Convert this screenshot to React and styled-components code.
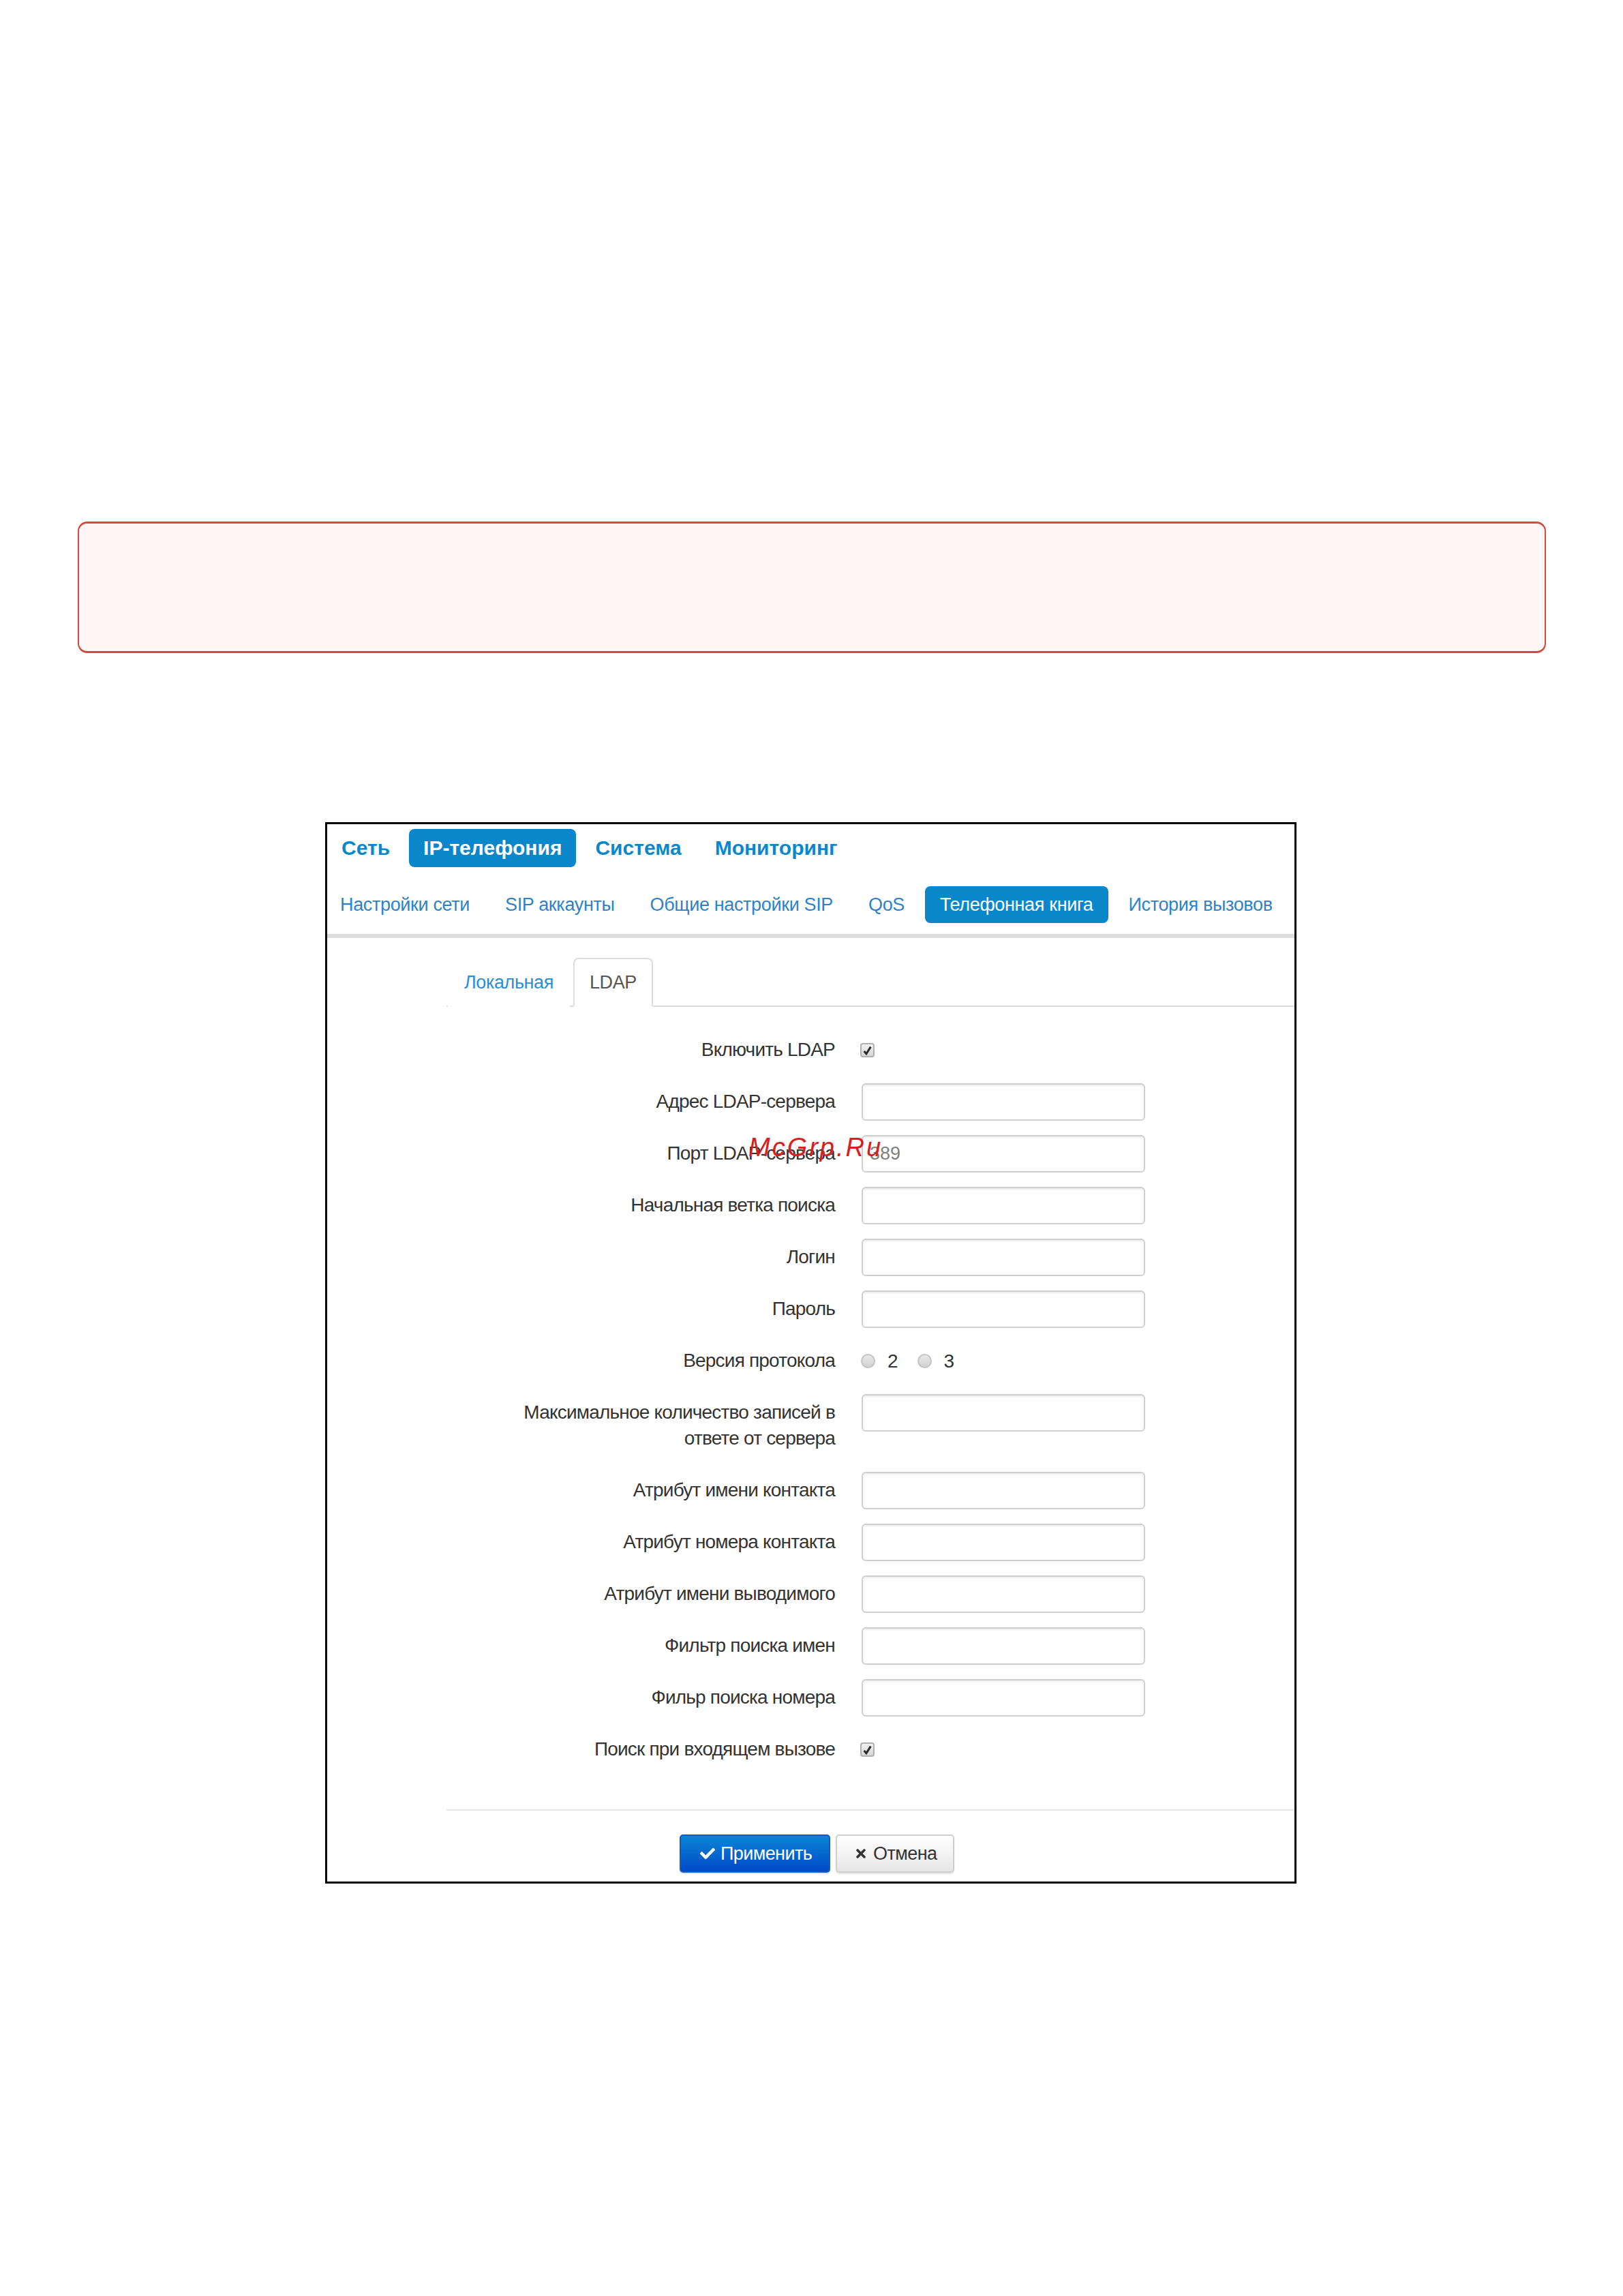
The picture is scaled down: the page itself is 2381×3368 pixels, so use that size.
import React from 'react';
import styled, { createGlobalStyle } from 'styled-components';
import { FaCheck, FaTimes } from 'react-icons/fa';

const GlobalStyle = createGlobalStyle`
  body {
    margin: 0;
    background: #fff;
    font-family: "Liberation Sans", Arial, sans-serif;
  }
`;

const Page = styled.div`
  width: 2381px;
  min-height: 3368px;
  padding-top: 765px;
  box-sizing: border-box;
`;

const Notice = styled.div`
  margin-left: 114px;
  width: 2154px;
  height: 193px;
  box-sizing: border-box;
  border: 2px solid #d64a3b;
  border-top-width: 3px;
  border-bottom-width: 3px;
  border-radius: 14px;
  background: #fff6f5;
`;

const Frame = styled.div`
  position: relative;
  margin: 248px 0 0 477px;
  width: 1425px;
  box-sizing: border-box;
  border: 3px solid #000;
  padding-bottom: 13px;
`;

const Watermark = styled.div`
  position: absolute;
  left: 618px;
  top: 455px;
  font-size: 38px;
  line-height: 38px;
  font-style: italic;
  letter-spacing: 3px;
  color: #d81e1e;
  pointer-events: none;
`;

// Navigation
const NavBlock = styled.div`
  padding: 7px 0 16px;
  border-bottom: 6px solid #dedede;
`;

const NavRow = styled.div`
  display: flex;
  align-items: center;
  gap: ${(p) => p.$gap}px;
  height: ${(p) => p.$height}px;
  margin-top: ${(p) => p.$top || 0}px;
  margin-left: ${(p) => p.$shift || 0}px;
`;

const NavItem = styled.div`
  height: 100%;
  display: flex;
  align-items: center;
  padding: 0 ${(p) => p.$pad}px;
  border-radius: 8px;
  font-size: ${(p) => p.$size}px;
  font-weight: ${(p) => (p.$bold ? 700 : 400)};
  letter-spacing: ${(p) => p.$track || 0}px;
  color: ${(p) => (p.$active ? '#fff' : p.$color)};
  background: ${(p) => (p.$active ? '#0a87cb' : 'transparent')};
  white-space: nowrap;
`;

// Tabs
const Content = styled.div`
  margin-left: 175px;
  padding-top: 29px;
`;

const TabBar = styled.div`
  display: flex;
  gap: 5px;
  height: 70px;
  padding-left: 2px;
  border-bottom: 2px solid #dddddd;
`;

const Tab = styled.div`
  height: 68px;
  display: flex;
  align-items: center;
  padding: 0 22px;
  font-size: 27px;
  letter-spacing: -0.4px;
  color: ${(p) => (p.$active ? '#555' : '#2a8fd4')};
  background: #fff;
  border: 2px solid ${(p) => (p.$active ? '#dddddd' : 'transparent')};
  border-bottom-color: transparent;
  border-radius: 8px 8px 0 0;
  margin-bottom: -2px;
`;

// Form
const Form = styled.div`
  display: grid;
  grid-template-columns: 570px 416px;
  column-gap: 39px;
  row-gap: 21px;
  margin-top: 36px;
`;

const Label = styled.div`
  text-align: right;
  padding: 8px 0 9px;
  line-height: 38px;
  font-size: 28px;
  letter-spacing: -0.8px;
  color: #333;
`;

const Control = styled.div`
  display: flex;
  align-items: center;
  height: 55px;
  align-self: ${(p) => (p.$top ? 'start' : 'auto')};
`;

const TextInput = styled.input`
  width: 416px;
  height: 55px;
  box-sizing: border-box;
  border: 2px solid #cfcfcf;
  border-radius: 6px;
  box-shadow: inset 0 2px 3px rgba(0, 0, 0, 0.08);
  padding: 0 10px;
  font-family: inherit;
  font-size: 27px;
  color: #808080;
  background: #fff;
  outline: none;
`;

const CheckBox = styled.span`
  width: 21px;
  height: 21px;
  margin-left: -2px;
  box-sizing: border-box;
  border: 2px solid #b0b0b0;
  border-radius: 4px;
  background: linear-gradient(#f2f2f2, #d6d6d6);
  display: flex;
  align-items: center;
  justify-content: center;
`;

const Radio = styled.span`
  width: 21px;
  height: 21px;
  margin-left: ${(p) => p.$offset}px;
  box-sizing: border-box;
  border: 2px solid #c4c4c4;
  border-radius: 50%;
  background: linear-gradient(#e8e8e8, #d2d2d2);
`;

const RadioText = styled.span`
  margin-left: 18px;
  font-size: 28px;
  color: #333;
`;

// Footer
const Footer = styled.div`
  margin-top: 60px;
  border-top: 2px solid #e6e6e6;
  padding: 35px 0 0 342px;
  display: flex;
  gap: 8px;
`;

const Button = styled.button`
  height: 56px;
  display: flex;
  align-items: center;
  gap: 8px;
  padding: ${(p) => (p.$primary ? '0 25px 0 28px' : '0 24px 0 25px')};
  font-family: inherit;
  font-size: 27px;
  letter-spacing: -0.6px;
  border-radius: 5px;
  color: ${(p) => (p.$primary ? '#fff' : '#333')};
  border: 2px solid ${(p) => (p.$primary ? '#0a5fc4' : '#cfcfcf')};
  background: ${(p) =>
    p.$primary ? 'linear-gradient(#0a86d6, #0049c6)' : 'linear-gradient(#ffffff, #e6e6e6)'};
  box-shadow: 0 2px 2px rgba(0, 0, 0, 0.12);
`;

const topNav = ['Сеть', 'IP-телефония', 'Система', 'Мониторинг'];
const subNav = [
  'Настройки сети',
  'SIP аккаунты',
  'Общие настройки SIP',
  'QoS',
  'Телефонная книга',
  'История вызовов',
];

const fields = [
  { label: 'Включить LDAP', type: 'check' },
  { label: 'Адрес LDAP-сервера' },
  { label: 'Порт LDAP-сервера', value: '389' },
  { label: 'Начальная ветка поиска' },
  { label: 'Логин' },
  { label: 'Пароль' },
  { label: 'Версия протокола', type: 'radio' },
  { label: ['Максимальное количество записей в', 'ответе от сервера'] },
  { label: 'Атрибут имени контакта' },
  { label: 'Атрибут номера контакта' },
  { label: 'Атрибут имени выводимого' },
  { label: 'Фильтр поиска имен' },
  { label: 'Фильр поиска номера' },
  { label: 'Поиск при входящем вызове', type: 'check' },
];

const CheckMark = () => (
  <svg width="13" height="14" viewBox="0 0 12 13">
    <path d="M1.5 7.5 L4.5 11 L10.5 1.5" fill="none" stroke="#2b2b2b" strokeWidth="2.8" />
  </svg>
);

const renderControl = (field) => {
  if (field.type === 'check') {
    return (
      <Control>
        <CheckBox>
          <CheckMark />
        </CheckBox>
      </Control>
    );
  }
  if (field.type === 'radio') {
    return (
      <Control>
        <Radio $offset={-1} />
        <RadioText>2</RadioText>
        <Radio $offset={28} />
        <RadioText>3</RadioText>
      </Control>
    );
  }
  return (
    <Control $top>
      <TextInput readOnly defaultValue={field.value || ''} />
    </Control>
  );
};

const App = () => {
  return (
    <>
      <GlobalStyle />
      <Page>
        <Notice />
        <Frame>
          <NavBlock>
            <NavRow $gap={7} $height={56}>
              {topNav.map((item) => (
                <NavItem key={item} $pad={21} $size={30} $bold $color="#0b87cc" $active={item === 'IP-телефония'}>
                  {item}
                </NavItem>
              ))}
            </NavRow>
            <NavRow $gap={8} $height={54} $top={28} $shift={-3}>
              {subNav.map((item) => (
                <NavItem
                  key={item}
                  $pad={22}
                  $size={27}
                  $track={-0.35}
                  $color="#2d83ca"
                  $active={item === 'Телефонная книга'}
                >
                  {item}
                </NavItem>
              ))}
            </NavRow>
          </NavBlock>

          <Content>
            <TabBar>
              <Tab>Локальная</Tab>
              <Tab $active>LDAP</Tab>
            </TabBar>

            <Form>
              {fields.map((field, i) => (
                <React.Fragment key={i}>
                  <Label>
                    {Array.isArray(field.label)
                      ? field.label.map((line) => <div key={line}>{line}</div>)
                      : field.label}
                  </Label>
                  {renderControl(field)}
                </React.Fragment>
              ))}
            </Form>

            <Footer>
              <Button $primary>
                <FaCheck size={22} />
                Применить
              </Button>
              <Button>
                <FaTimes size={20} />
                Отмена
              </Button>
            </Footer>
          </Content>

          <Watermark>McGrp.Ru</Watermark>
        </Frame>
      </Page>
    </>
  );
};

export default App;
